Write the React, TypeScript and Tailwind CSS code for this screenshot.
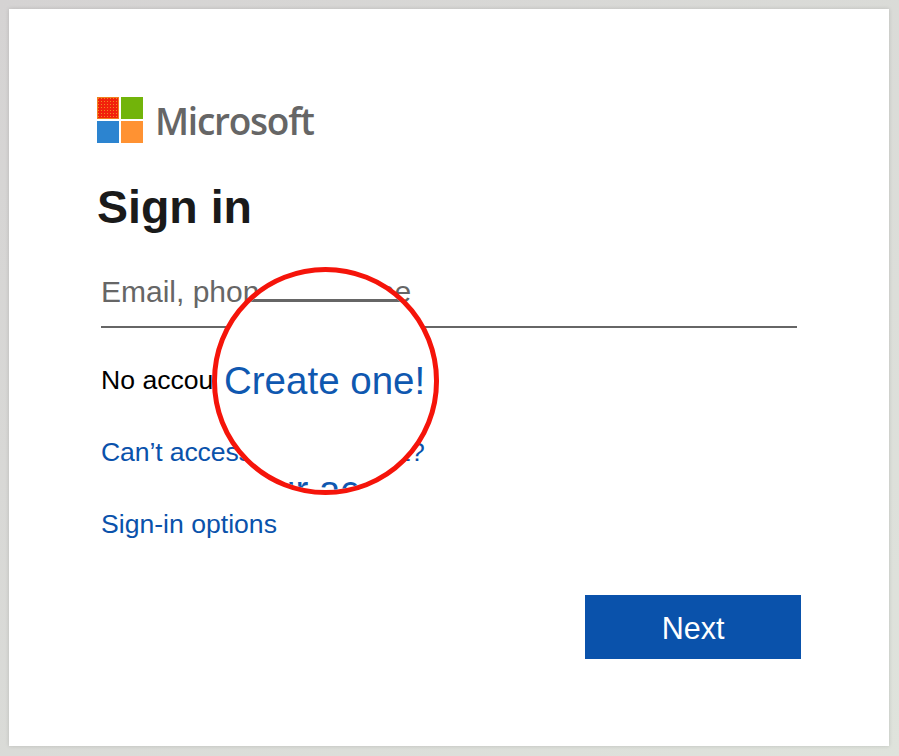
export default function App() {
  return (
    <div className="w-[899px] h-[756px] bg-gradient-to-br from-[#d5d3d3] to-[#dfe3dc] p-[9px_10px_10px_9px] font-['Liberation_Sans',Arial,sans-serif] overflow-hidden">
      <div className="relative w-[880px] h-[737px] bg-white shadow-[0_0_4px_rgba(0,0,0,0.15)] flex flex-col pl-[92px] pr-[88px] pt-[88px]">
        <div className="flex items-center h-[46px] gap-[13px] -ml-1">
          <svg width="46" height="46" viewBox="0 0 46 46" className="shrink-0">
            <defs>
              <pattern id="dots" width="3" height="3" patternUnits="userSpaceOnUse">
                <rect width="3" height="3" fill="#f2210c" />
                <rect x="1" y="1" width="1" height="1" fill="#f08a22" />
              </pattern>
            </defs>
            <rect x="0" y="0" width="22" height="22" fill="#f0801e" />
            <rect x="1" y="1" width="20" height="20" fill="url(#dots)" />
            <rect x="24" y="0" width="22" height="22" fill="#72b40a" />
            <rect x="0" y="24" width="22" height="22" fill="#2c84d0" />
            <rect x="24" y="24" width="22" height="22" fill="#ff9232" />
          </svg>
          <span className="-ml-px text-[37px] leading-none font-semibold text-[#666666] font-['Open_Sans',sans-serif] tracking-[-1.25px]">Microsoft</span>
        </div>
        <h1 className="mt-[39px] -ml-1 text-[46.5px] leading-[50px] font-bold text-[#1a1a1a]">Sign in</h1>
        <div className="mt-[38px] h-[58px] w-[696px] border-b-2 border-[#666666] text-[30px] leading-[44px] text-[#666666]">Email, phone, or Skype</div>
        <div className="mt-[37px] text-[26.6px] leading-[30px] text-black">No account? <span className="text-[#0a52ab]">Create one!</span></div>
        <div className="mt-[42px] text-[26.6px] leading-[30px] text-[#0a52ab] tracking-[-0.12px]">Can’t access your account?</div>
        <div className="mt-[42px] text-[26.6px] leading-[30px] text-[#0a52ab]">Sign-in options</div>
        <div className="mt-[56px] flex justify-end w-[700px]">
          <div className="w-[216px] h-[64px] pt-[4px] bg-[#0a52ab] text-white text-[30.5px] flex items-center justify-center">Next</div>
        </div>

        <div className="absolute left-[203px] top-[258px] w-[227px] h-[228px] rounded-full border-[5px] border-[#f5140a] bg-white overflow-hidden">
          <div className="absolute left-0 top-[27px] w-full h-[3px] bg-[#666666]" />
          <div className="absolute left-[7px] top-[87px] text-[38.5px] leading-[44px] text-[#0f58b0] whitespace-nowrap">Create one!</div>
          <div className="absolute left-[57px] top-[196px] text-[38.5px] leading-[44px] text-[#0f58b0] whitespace-nowrap">ur acc</div>
        </div>
      </div>
    </div>
  );
}
